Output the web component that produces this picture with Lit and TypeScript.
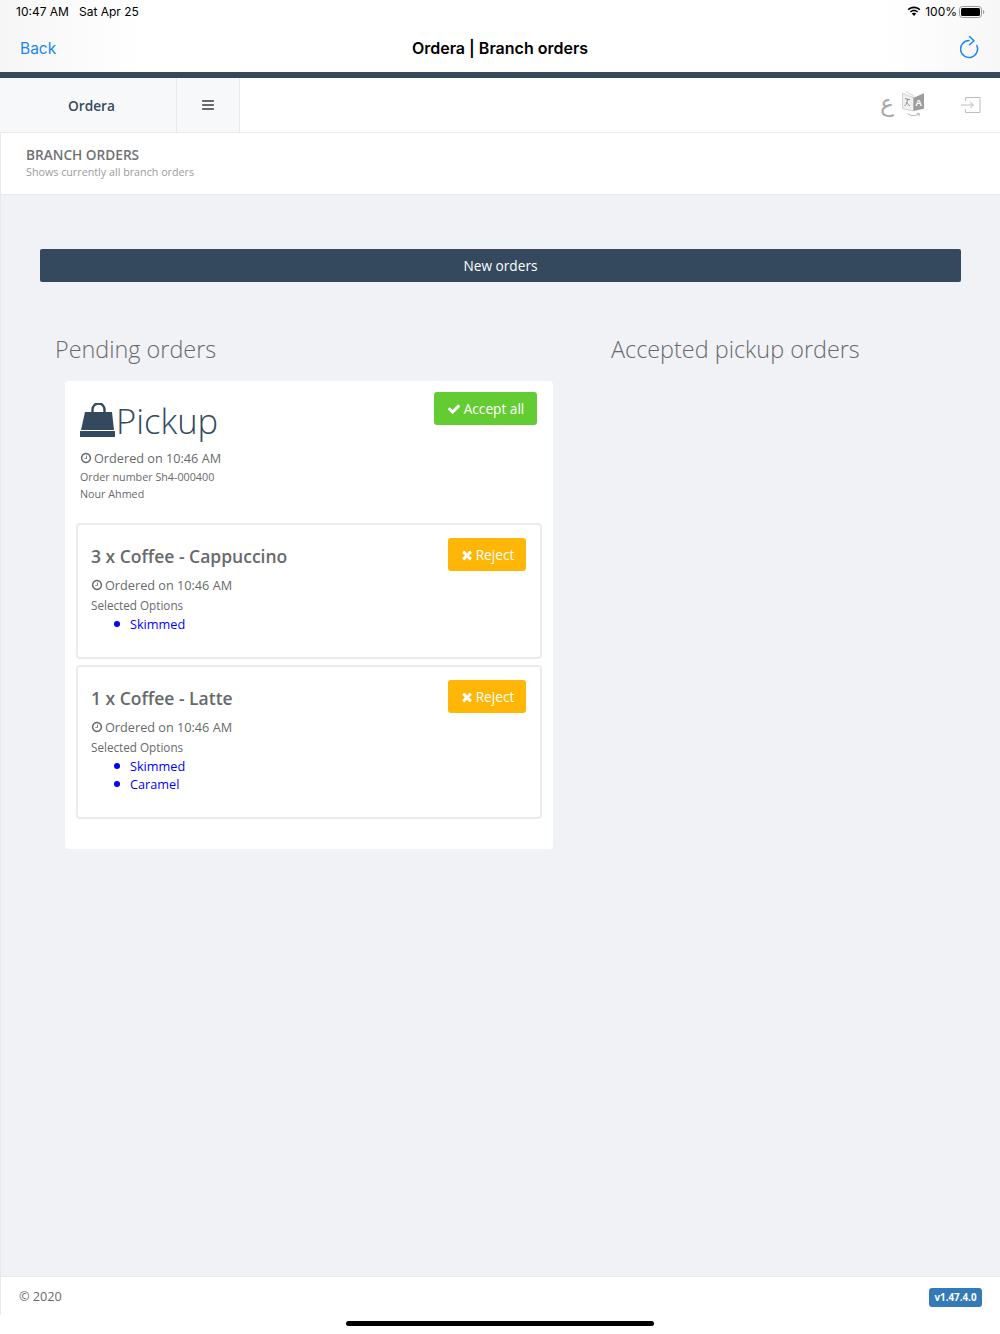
import { LitElement, html, css, svg } from 'lit';
import { customElement } from 'lit/decorators.js';

const clock = svg`<path d="M1024 544v448q0 14-9 23t-23 9h-320q-14 0-23-9t-9-23v-64q0-14 9-23t23-9h224v-352q0-14 9-23t23-9h64q14 0 23 9t9 23zm416 352q0-148-73-273t-198-198-273-73-273 73-198 198-73 273 73 273 198 198 273 73 273-73 198-198 73-273zm224 0q0 209-103 385.5t-279.5 279.5-385.5 103-385.5-103-279.5-279.5-103-385.5 103-385.5 279.5-279.5 385.5-103 385.5 103 279.5 279.5 103 385.5z"/>`;
const check = svg`<path d="M1671 566q0 40-28 68l-724 724-136 136q-28 28-68 28t-68-28l-136-136-362-362q-28-28-28-68t28-68l136-136q28-28 68-28t68 28l294 295 656-657q28-28 68-28t68 28l136 136q28 28 28 68z"/>`;
const times = svg`<path d="M1490 1322q0 40-28 68l-136 136q-28 28-68 28t-68-28l-294-294-294 294q-28 28-68 28t-68-28l-136-136q-28-28-28-68t28-68l294-294-294-294q-28-28-28-68t28-68l136-136q28-28 68-28t68 28l294 294 294-294q28-28 68-28t68 28l136 136q28 28 28 68t-28 68l-294 294 294 294q28 28 28 68z"/>`;

const faIcon = (body: unknown, cls: string) =>
  html`<svg class=${cls} viewBox="0 0 1792 1792" fill="currentColor">${body}</svg>`;

interface OrderItem {
  title: string;
  options: string[];
}

const items: OrderItem[] = [
  { title: '3 x Coffee - Cappuccino', options: ['Skimmed'] },
  { title: '1 x Coffee - Latte', options: ['Skimmed', 'Caramel'] },
];

@customElement('app-root')
export class AppRoot extends LitElement {
  static styles = css`
    :host {
      display: flex;
      flex-direction: column;
      height: 1334px;
      font-family: 'Open Sans', sans-serif;
      color: #676a6c;
      background: #fff;
      overflow: hidden;
    }

    .ios-head {
      height: 72px;
      flex: none;
      box-sizing: border-box;
      background: linear-gradient(90deg, #f6f6f6, #fff 14%, #fff 88%, #f7f7f7);
      font-family: Inter, 'Liberation Sans', sans-serif;
      color: #000;
    }

    .status {
      height: 23px;
      display: flex;
      justify-content: space-between;
      align-items: center;
      padding: 0 15px 0 16px;
      font-size: 12px;
    }

    .status-left {
      display: flex;
      gap: 10px;
    }

    .status-right {
      display: flex;
      align-items: center;
    }

    .wifi {
      margin-right: 4px;
    }

    .battery {
      margin-left: 2px;
    }

    .nav {
      height: 49px;
      display: flex;
      align-items: center;
      justify-content: space-between;
      padding: 0 20px;
    }

    .back {
      color: #1a84f5;
      font-size: 15.5px;
      width: 60px;
      padding-top: 1px;
    }

    .nav-title {
      font-size: 16px;
      font-weight: 600;
    }

    .reload {
      width: 60px;
      display: flex;
      justify-content: flex-end;
    }

    .rule {
      height: 6px;
      flex: none;
      background: #34495e;
    }

    .topbar {
      height: 54px;
      flex: none;
      display: flex;
      border-bottom: 1px solid #e7eaec;
    }

    .brand {
      width: 177px;
      background: #f7f8fa;
      border-right: 1px solid #e7eaec;
      display: flex;
      align-items: center;
      justify-content: center;
      color: #34495e;
      font-size: 13.7px;
      font-weight: 600;
      padding-left: 7px;
      box-sizing: border-box;
    }

    .burger {
      width: 63px;
      box-sizing: border-box;
      background: #f7f8fa;
      border-right: 1px solid #e7eaec;
      display: flex;
      align-items: center;
      justify-content: center;
    }

    .burger svg {
      width: 12px;
      height: 12px;
      color: #676a6c;
    }

    .top-tools {
      flex: 1;
      display: flex;
      align-items: center;
      justify-content: flex-end;
      padding-right: 19px;
    }

    .arabic {
      font-family: 'DejaVu Sans', sans-serif;
      font-size: 23px;
      line-height: 30px;
      color: #a8a8a8;
      margin-right: 8px;
      margin-bottom: 4px;
    }

    .translate {
      margin-right: 36px;
      margin-bottom: 2px;
    }

    .body {
      flex: 1;
      display: flex;
      flex-direction: column;
      border-left: 1px solid #e7eaec;
      background: #f1f2f6;
      min-height: 0;
    }

    .page-head {
      height: 62px;
      flex: none;
      box-sizing: border-box;
      background: #fff;
      border-bottom: 1px solid #e7eaec;
      padding: 12px 25px 0;
    }

    .page-head h2 {
      margin: 0;
      font-size: 13.65px;
      line-height: 19px;
      font-weight: 600;
      color: #707274;
    }

    .page-head p {
      margin: 0;
      font-size: 10.74px;
      line-height: 16px;
      color: #9a9c9e;
    }

    .content {
      flex: 1;
      padding: 54px 39px 0;
    }

    .new-orders {
      height: 33px;
      background: #34495e;
      border-radius: 2px;
      color: #fff;
      font-size: 13.65px;
      display: flex;
      align-items: center;
      justify-content: center;
    }

    .columns {
      display: grid;
      grid-template-columns: 556px 1fr;
      margin-top: 51px;
    }

    .col-title {
      margin: 0 0 15px 15px;
      font-size: 23.4px;
      line-height: 33px;
      font-weight: 300;
      color: #676a6c;
    }

    .order {
      margin-left: 25px;
      width: 488px;
      box-sizing: border-box;
      background: #fff;
      border-radius: 4px;
      padding: 11px 11px 24px;
    }

    .order-head {
      display: flex;
      justify-content: space-between;
      align-items: flex-start;
      padding: 0 5px 0 4px;
      height: 131px;
    }

    .pickup {
      display: flex;
      align-items: center;
      height: 36px;
      margin-top: 11px;
      font-size: 34.6px;
      line-height: 36px;
      font-weight: 300;
      color: #34495e;
    }

    .when {
      display: flex;
      align-items: center;
      gap: 2px;
      font-size: 12.7px;
      line-height: 18px;
    }

    .clock {
      width: 12px;
      height: 12px;
      flex: none;
    }

    .head-meta {
      margin-top: 10px;
    }

    .head-meta .when {
      margin-bottom: 2px;
    }

    .small {
      font-size: 10.74px;
      line-height: 17px;
    }

    .btn {
      display: flex;
      align-items: center;
      justify-content: center;
      gap: 2px;
      height: 33px;
      box-sizing: border-box;
      border-radius: 3px;
      color: #fff;
      font-size: 13.65px;
    }

    .btn svg {
      width: 14px;
      height: 14px;
    }

    .accept {
      width: 103px;
      gap: 3px;
      background: #64cc33;
    }

    .reject {
      width: 78px;
      background: #ffb606;
    }

    .item {
      box-sizing: border-box;
      border: 2px solid #e9ebed;
      border-radius: 4px;
      padding: 13px 14px 0 13px;
      margin-bottom: 6px;
      display: flex;
      justify-content: space-between;
      align-items: flex-start;
    }

    .item h3 {
      margin: 5px 0 7px;
      font-size: 17.5px;
      line-height: 26px;
      font-weight: 600;
      color: #676a6c;
    }

    .opts-label {
      font-size: 11.7px;
      line-height: 20px;
      margin-top: 1px;
    }

    .item ul {
      margin: 0 0 24px;
      padding: 0 0 0 23px;
      list-style: none;
      color: #0000ff;
      font-size: 12.7px;
      line-height: 18px;
    }

    .item li {
      display: flex;
      align-items: center;
      gap: 10px;
    }

    .item li::before {
      content: '';
      width: 6px;
      height: 6px;
      border-radius: 50%;
      background: #0000ff;
    }

    .footer {
      height: 39px;
      flex: none;
      box-sizing: border-box;
      background: #fff;
      border-top: 1px solid #e7eaec;
      display: flex;
      align-items: center;
      justify-content: space-between;
      padding: 0 18px;
      font-size: 12.7px;
    }

    .version {
      background: #337ab7;
      color: #fff;
      font-size: 9.8px;
      font-weight: 700;
      border-radius: 3px;
      padding: 3px 5.5px;
      line-height: 13px;
      margin-top: 2px;
    }

    .home {
      height: 19px;
      flex: none;
      display: flex;
      justify-content: center;
      padding-top: 6px;
      box-sizing: border-box;
    }

    .home span {
      width: 308px;
      height: 5px;
      border-radius: 3px;
      background: #000;
    }
  `;

  renderItem(item: OrderItem) {
    return html`
      <div class="item">
        <div>
          <h3>${item.title}</h3>
          <div class="when">${faIcon(clock, 'clock')}Ordered on 10:46 AM</div>
          <div class="opts-label">Selected Options</div>
          <ul>
            ${item.options.map((o) => html`<li>${o}</li>`)}
          </ul>
        </div>
        <div class="btn reject">${faIcon(times, '')}Reject</div>
      </div>
    `;
  }

  render() {
    return html`
      <div class="ios-head">
        <div class="status">
          <div class="status-left"><span>10:47 AM</span><span>Sat Apr 25</span></div>
          <div class="status-right">
            <svg class="wifi" width="14" height="11" viewBox="0 0 16 12" fill="#000">
              <path d="M8 2.2c2.3 0 4.4.9 6 2.4l1.2-1.3C13.300 1.500 10.800.4 8 .4S2.700 1.500.8 3.300L2 4.600c1.600-1.500 3.700-2.400 6-2.400z"/>
              <path d="M8 5.700c1.300 0 2.500.5 3.500 1.400l1.200-1.300C11.400 4.600 9.800 3.900 8 3.900s-3.400.7-4.700 1.900l1.200 1.300c1-.9 2.200-1.400 3.500-1.400z"/>
              <path d="M8 7.400c-1 0-1.900.4-2.500.9L8 11l2.500-2.700c-.6-.5-1.500-.9-2.500-.9z"/>
            </svg>
            <span>100%</span>
            <svg class="battery" width="26" height="12" viewBox="0 0 26 12">
              <rect x=".5" y=".5" width="22" height="11" rx="3" fill="none" stroke="#999"/>
              <rect x="2" y="2" width="19" height="8" rx="1.500" fill="#000"/>
              <path d="M24 4v4c.8-.3 1.300-1.100 1.300-2S24.800 4.300 24 4z" fill="#999"/>
            </svg>
          </div>
        </div>
        <div class="nav">
          <span class="back">Back</span>
          <span class="nav-title">Ordera | Branch orders</span>
          <span class="reload">
            <svg width="20" height="24" viewBox="0 0 20 24" fill="none" stroke="#1a84f5" stroke-width="1.500" stroke-linecap="round" stroke-linejoin="round">
              <path d="M9 4.500A8.500 8.500 0 1 0 16.800 9.500"/>
              <path d="M9.500.5L14 4.700 9.500 8.700"/>
            </svg>
          </span>
        </div>
      </div>
      <div class="rule"></div>
      <div class="topbar">
        <div class="brand">Ordera</div>
        <div class="burger">
          <svg viewBox="0 0 12 12" fill="currentColor">
            <rect y="1" width="12" height="2" rx=".4"/>
            <rect y="5" width="12" height="2" rx=".4"/>
            <rect y="9" width="12" height="2" rx=".4"/>
          </svg>
        </div>
        <div class="top-tools">
          <span class="arabic">ع</span>
          <svg class="translate" width="23" height="26" viewBox="0 0 23 26">
            <path d="M4 .5l7.500 4v3" fill="#f2f2f2" stroke="#cfcfcf" stroke-width=".8"/>
            <path d="M.5 2.300l11 4.400V20l-11-2.300z" fill="#f0f0f0" stroke="#c9c9c9" stroke-width=".8"/>
            <path d="M11.500 6.700L22 2.300v15.400L11.500 20z" fill="#9d9d9d"/>
            <path d="M3 7.500l5 1.300M5.500 8c0 3-1.200 5.500-3 7M5 11.500c.6 1.500 1.500 2.500 3 3.300" fill="none" stroke="#8f8f8f" stroke-width="1"/>
            <text x="16.800" y="15" text-anchor="middle" font-family="Liberation Sans" font-weight="700" font-size="9.500" fill="#fff">A</text>
            <path d="M5.500 22.500c3 2.800 8 2.800 11.500 .3M14.800 22.300l2.600.2-.5 2.500" fill="none" stroke="#b5b5b5"/>
          </svg>
          <svg width="20" height="18" viewBox="0 0 20 18" fill="none" stroke="#bdbdbd" stroke-width="1">
            <path d="M4.500 5V1.500h14.500v15H4.500V13"/>
            <path d="M0 9h12M9 6l3.500 3L9 12"/>
          </svg>
        </div>
      </div>
      <div class="body">
        <div class="page-head">
          <h2>BRANCH ORDERS</h2>
          <p>Shows currently all branch orders</p>
        </div>
        <div class="content">
          <div class="new-orders">New orders</div>
          <div class="columns">
            <div>
              <h2 class="col-title">Pending orders</h2>
              <div class="order">
                <div class="order-head">
                  <div>
                    <div class="pickup">
                      <svg width="36" height="36" viewBox="0 0 36 36" fill="#34495e">
                        <path d="M5 9h27l2 18H1z"/>
                        <rect x="0" y="28" width="35" height="6" rx=".5"/>
                        <path d="M12.500 14V6.500a6 6 0 0 1 12 0V14" fill="none" stroke="#34495e" stroke-width="2.400"/>
                        <path d="M15 9h7v3h-7z" fill="#34495e"/>
                      </svg>
                      <span>Pickup</span>
                    </div>
                    <div class="head-meta">
                      <div class="when">${faIcon(clock, 'clock')}Ordered on 10:46 AM</div>
                      <div class="small">Order number Sh4-000400</div>
                      <div class="small">Nour Ahmed</div>
                    </div>
                  </div>
                  <div class="btn accept">${faIcon(check, '')}Accept all</div>
                </div>
                ${items.map((i) => this.renderItem(i))}
              </div>
            </div>
            <div>
              <h2 class="col-title">Accepted pickup orders</h2>
            </div>
          </div>
        </div>
        <div class="footer">
          <span>© 2020</span>
          <span class="version">v1.47.4.0</span>
        </div>
      </div>
      <div class="home"><span></span></div>
    `;
  }
}
